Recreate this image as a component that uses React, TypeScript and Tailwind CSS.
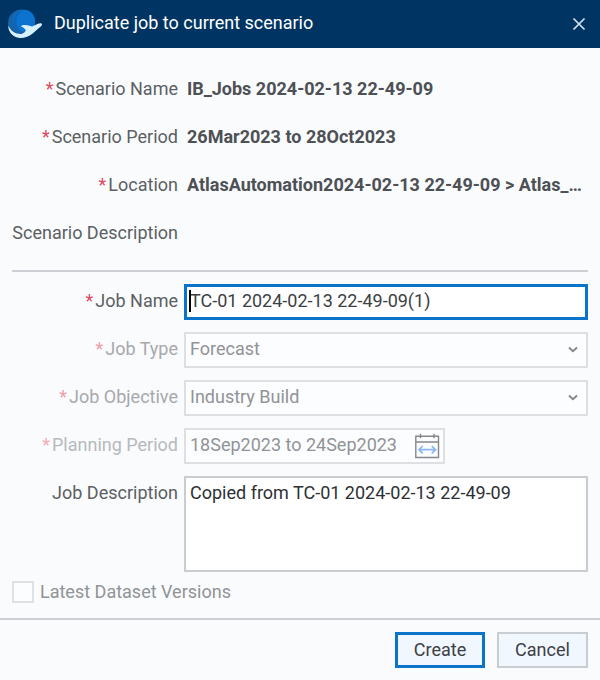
import type { ReactNode } from "react";

function Logo() {
  return (
    <svg className="h-8 w-9 shrink-0" viewBox="0 0 36 32" fill="none">
      <circle cx="14.500" cy="15" r="13.500" fill="#1763a8" />
      <circle cx="17" cy="12.700" r="11" fill="#0d73d0" />
      <path d="M6.500 13C7 6 13 2 18.500 2.500 11 4 8 10 10 17.500c1 3 3 5 5.500 6.500-5-1-9-6-9-11Z" fill="#0c65b9" />
      <path
        d="M1.200 17.500C3.500 22.800 8.500 26.300 14.500 26c2.200-.8 3.700-2.300 4.300-3.500-1-2.200-2.600-3.300-5.100-4.300 1.800-1.300 5-1.500 8-.6l3.300.8 6-2.700c2.200-1 4-.5 4 .8-.1 1-1 1.900-2.500 3.100l-6.200 5.300C22 28.500 17.500 30.200 12.800 30 6 29.600 1.200 24 1.200 17.500Z"
        fill="#d7f0ff"
      />
    </svg>
  );
}

function Row({
  label,
  required = false,
  tone = "text-[#5c5f63]",
  star = "text-[#dc4760]",
  children,
}: {
  label: string;
  required?: boolean;
  tone?: string;
  star?: string;
  children?: ReactNode;
}) {
  return (
    <div className="flex min-h-9 items-start">
      <div className={`mr-1.5 flex h-[34px] w-[166px] shrink-0 items-center justify-end whitespace-nowrap ${tone}`}>
        {required && <span className={`mr-0.5 ${star}`}>*</span>}
        <span>{label}</span>
      </div>
      {children}
    </div>
  );
}

function Value({ children }: { children: ReactNode }) {
  return <div className="min-w-0 flex-1 truncate pr-1 pl-[3px] leading-[34px] font-bold text-[#4d5054]">{children}</div>;
}

function Select({ value }: { value: string }) {
  return (
    <div className="flex h-9 flex-1 items-center justify-between border-2 border-[#dedfe2] bg-[#fcfdff] pr-2 pb-0.5 pl-1 text-[#919396]">
      {value}
      <svg className="h-[7px] w-2.5" viewBox="0 0 10 7" fill="none" stroke="#85878b" strokeWidth="1.900">
        <path d="m1 1.500 4 3.700 4-3.700" />
      </svg>
    </div>
  );
}

function CalendarIcon() {
  return (
    <svg className="h-[26px] w-[26px]" viewBox="0 0 26 26" fill="none" stroke="#85878a" strokeWidth="1.400">
      <path d="M1.800 3.200h22.700v21.300H1.800zM1.800 9h22.700M6.500.8v4.400M20 .8v4.400" />
      <path d="M5 16.700h16.500M8.700 13 5 16.700l3.700 3.700M17.800 13l3.700 3.700-3.700 3.700" stroke="#8bb8ec" strokeWidth="1.700" />
    </svg>
  );
}

export default function App() {
  return (
    <div className="flex h-[680px] w-[600px] flex-col bg-[#f9fbfd] font-['Roboto',sans-serif] text-[18px] leading-6">
      <header className="flex h-12 items-center bg-[#003462] pr-[14px] pl-[7px] text-white">
        <Logo />
        <h1 className="ml-[11px] flex-1 pb-0.5">Duplicate job to current scenario</h1>
        <svg className="h-[14px] w-[14px]" viewBox="0 0 14 14" fill="none" stroke="#d2e4f3" strokeWidth="1.700">
          <path d="m1.500 1.500 11 11m0-11-11 11" />
        </svg>
      </header>

      <main className="px-3">
        <section className="flex flex-col gap-3 border-b-2 border-[#cccfd3] pt-6 pb-[18px]">
          <Row label="Scenario Name" required><Value>IB_Jobs 2024-02-13 22-49-09</Value></Row>
          <Row label="Scenario Period" required><Value>26Mar2023 to 28Oct2023</Value></Row>
          <Row label="Location" required><Value>AtlasAutomation2024-02-13 22-49-09 &gt; Atlas_…</Value></Row>
          <Row label="Scenario Description" />
        </section>
        <section className="flex flex-col gap-3 pt-3">
          <Row label="Job Name" required>
            <div className="flex h-9 flex-1 items-center border-[3px] border-[#0a74ca] bg-white pb-0.5 pl-[3px] text-[#3c3f43]">
              <span className="-mr-px h-[22px] w-0.5 -translate-x-px bg-black" />
              <span className="-ml-px">TC-01 2024-02-13 22-49-09(1)</span>
            </div>
          </Row>
          <Row label="Job Type" required tone="text-[#a7a9ac]" star="text-[#f09cab]"><Select value="Forecast" /></Row>
          <Row label="Job Objective" required tone="text-[#a7a9ac]" star="text-[#f09cab]"><Select value="Industry Build" /></Row>
          <Row label="Planning Period" required tone="text-[#b7b9bc]" star="text-[#f0adb8]">
            <div className="flex h-9 w-[261px] items-center justify-between border-2 border-[#dedfe2] bg-[#fcfdff] pr-[3px] pl-1 text-[#919396]">
              <span className="pb-0.5">18Sep2023 to 24Sep2023</span>
              <CalendarIcon />
            </div>
          </Row>
          <Row label="Job Description">
            <div className="h-24 flex-1 border-2 border-[#c9cdd1] bg-white px-1 pt-[3px] text-[#2d3034]">
              Copied from TC-01 2024-02-13 22-49-09
            </div>
          </Row>
        </section>
        <div className="mt-[9px] flex h-[22px] items-center text-[#919396]">
          <span className="mr-1.5 size-[22px] border-2 border-[#dfe1e4] bg-[#fcfdff]" />
          <span>Latest Dataset Versions</span>
        </div>
      </main>

      <footer className="mt-auto flex h-[62px] justify-end gap-3 border-t-2 border-[#cccfd3] px-3 pt-3 text-[#3c4045]">
        <button className="h-9 w-[90px] border-[3px] border-[#0a74ca] bg-[#f1f7ff]">Create</button>
        <button className="h-9 w-[91px] border-2 border-[#c9cdd1] bg-[#f1f7ff]">Cancel</button>
      </footer>
    </div>
  );
}
